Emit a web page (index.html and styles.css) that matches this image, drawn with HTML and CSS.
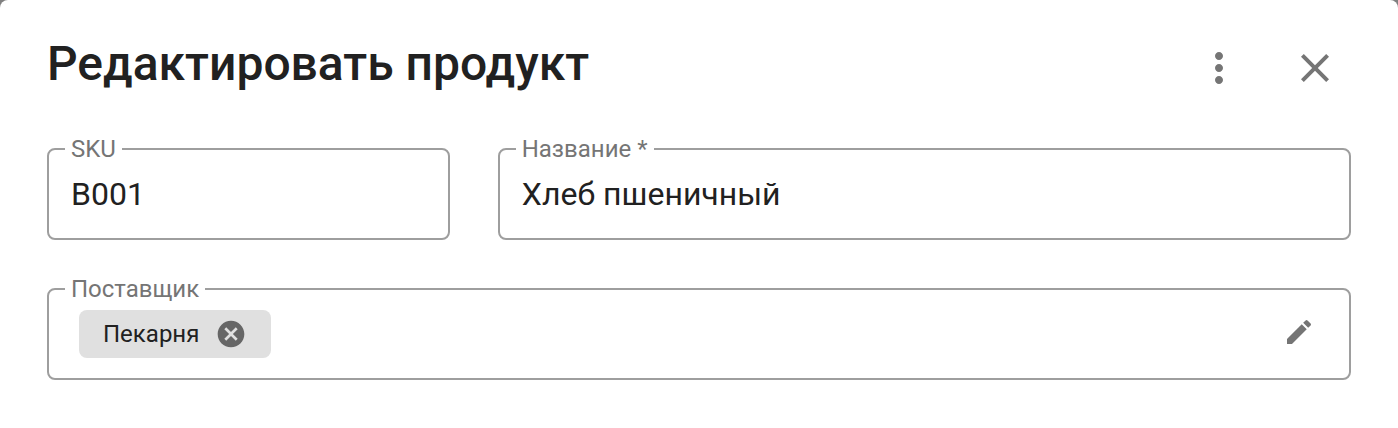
FILE: index.html
```html
<!DOCTYPE html>
<html lang="ru">
<head>
<meta charset="utf-8">
<title>Редактировать продукт</title>
<link rel="stylesheet" href="styles.css">
</head>
<body>
<main class="dialog">
  <header class="header">
    <h1 class="title">Редактировать продукт</h1>
    <div class="actions">
      <button class="icon-button" type="button" aria-label="Меню">
        <svg class="icon" viewBox="0 0 24 24"><path d="M12 8c1.1 0 2-.9 2-2s-.9-2-2-2-2 .9-2 2 .9 2 2 2zm0 2c-1.1 0-2 .9-2 2s.9 2 2 2 2-.9 2-2-.9-2-2-2zm0 6c-1.1 0-2 .9-2 2s.9 2 2 2 2-.9 2-2-.9-2-2-2z"/></svg>
      </button>
      <button class="icon-button" type="button" aria-label="Закрыть">
        <svg class="icon" viewBox="0 0 24 24"><path d="M19 6.41 17.59 5 12 10.59 6.41 5 5 6.41 10.59 12 5 17.59 6.41 19 12 13.41 17.59 19 19 17.59 13.41 12z"/></svg>
      </button>
    </div>
  </header>
  <form class="form">
    <fieldset class="field field-short">
      <legend class="legend"><label for="sku">SKU</label></legend>
      <input class="input" id="sku" type="text" value="B001">
    </fieldset>
    <fieldset class="field field-long">
      <legend class="legend"><label for="name">Название *</label></legend>
      <input class="input" id="name" type="text" value="Хлеб пшеничный" required>
    </fieldset>
    <fieldset class="field field-full">
      <legend class="legend">Поставщик</legend>
      <div class="picker">
        <span class="chip">Пекарня
          <button class="plain-button" type="button" aria-label="Удалить Пекарня">
            <svg class="icon-small icon-cancel" viewBox="0 0 24 24"><path d="M12 2C6.47 2 2 6.47 2 12s4.47 10 10 10 10-4.47 10-10S17.53 2 12 2zm5 13.59L15.59 17 12 13.41 8.41 17 7 15.59 10.59 12 7 8.41 8.41 7 12 10.59 15.59 7 17 8.41 13.41 12 17 15.59z"/></svg>
          </button>
        </span>
        <button class="plain-button edit-button" type="button" aria-label="Изменить поставщика">
          <svg class="icon-small" viewBox="0 0 24 24"><path d="M3 17.25V21h3.75L17.81 9.94l-3.75-3.75L3 17.25zM20.71 7.04c.39-.39.39-1.02 0-1.41l-2.34-2.34a.9959.9959 0 0 0-1.41 0l-1.83 1.83 3.75 3.75 1.83-1.83z"/></svg>
        </button>
      </div>
    </fieldset>
  </form>
</main>
</body>
</html>
```
FILE: styles.css
```css
* {
  box-sizing: border-box;
}

body {
  margin: 0;
  background: #808080;
  color: #212121;
  font-family: Roboto, "Noto Sans", sans-serif;
}

.dialog {
  min-height: 100vh;
  padding: 20px 47px 48px;
  border-radius: 8px 8px 0 0;
  background: #fff;
}

.header {
  display: flex;
  align-items: center;
  justify-content: space-between;
  margin-right: -12px;
}

.title {
  margin: 0;
  padding-bottom: 8px;
  font-size: 48px;
  font-weight: 500;
  line-height: 56px;
}

.actions {
  display: flex;
}

.icon-button {
  display: flex;
  padding: 24px;
  border: 0;
  background: none;
  color: #757575;
}

.plain-button {
  display: flex;
  padding: 0;
  border: 0;
  background: none;
  color: #757575;
}

.edit-button {
  padding-bottom: 4px;
}

.icon {
  width: 48px;
  height: 48px;
  fill: currentColor;
}

.icon-small {
  width: 32px;
  height: 32px;
  fill: currentColor;
}

.icon-cancel {
  fill: #666;
}

.form {
  display: grid;
  grid-template-columns: repeat(12, 1fr);
  gap: 36px 48px;
  margin-top: 20px;
}

.field {
  min-width: 0;
  margin: 0;
  padding: 0;
  border: 2px solid #9e9e9e;
  border-radius: 8px;
}

.field-short {
  grid-column: span 4;
}

.field-long {
  grid-column: span 8;
}

.field-full {
  grid-column: span 12;
}

.legend {
  margin-left: 16px;
  padding: 0 6px;
  color: #757575;
  font-size: 24px;
  line-height: 26px;
}

.input {
  display: block;
  width: 100%;
  height: 76px;
  padding: 0 22px 12px;
  border: 0;
  outline: 0;
  background: none;
  color: inherit;
  font: inherit;
  font-size: 32px;
}

.picker {
  display: flex;
  align-items: center;
  justify-content: space-between;
  height: 76px;
  padding: 0 34px 12px 30px;
}

.chip {
  display: flex;
  align-items: center;
  gap: 16px;
  height: 48px;
  padding: 0 24px;
  border-radius: 8px;
  background: #e0e0e0;
  font-size: 24px;
}
```
